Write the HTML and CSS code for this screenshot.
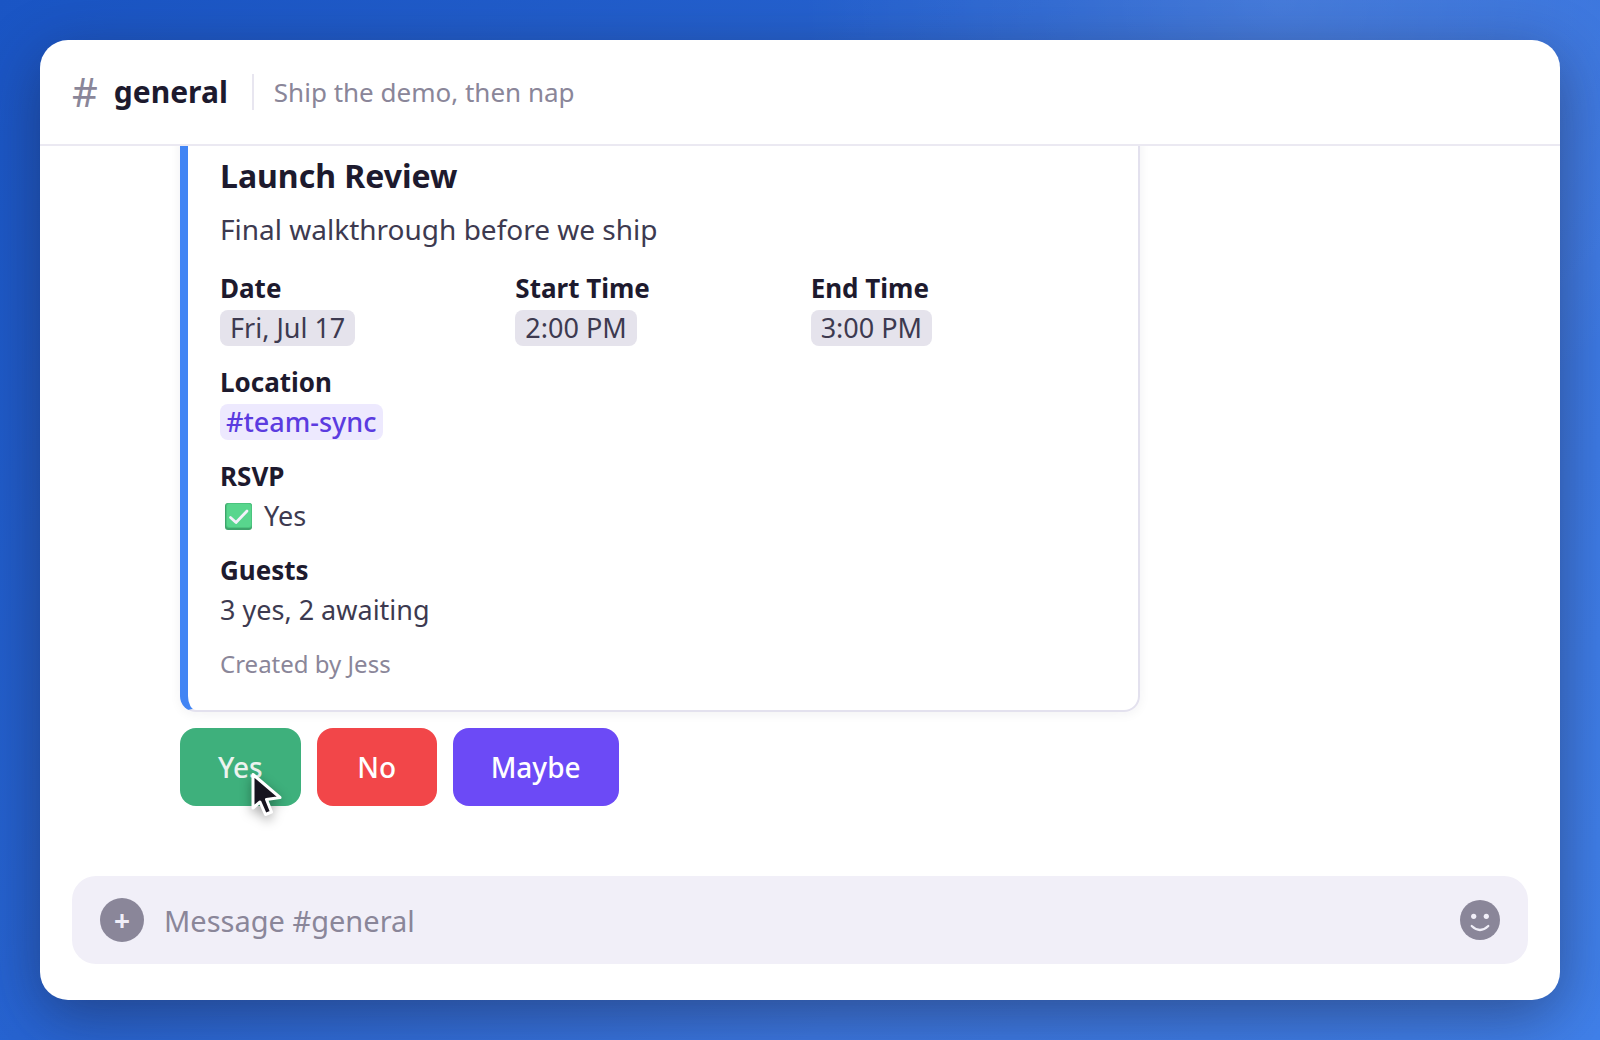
FILE: index.html
```html
<!DOCTYPE html>
<html lang="en">
  <head>
    <meta charset="UTF-8" />
    <title>#general</title>
    <meta name="viewport" content="width=device-width, initial-scale=1.0" />
    <link rel="stylesheet" href="styles.css">
  </head>
  <body>
    <main class="window">
      <header class="channel-header">
        <span class="hash">#</span>
        <h1 class="channel-name">general</h1>
        <span class="topic">Ship the demo, then nap</span>
      </header>

      <section class="messages">
        <article class="embed">
          <h2 class="embed-title">Launch Review</h2>
          <p class="embed-description">Final walkthrough before we ship</p>
          <dl class="fields">
            <div class="field">
              <dt>Date</dt>
              <dd><time class="timestamp">Fri, Jul 17</time></dd>
            </div>
            <div class="field">
              <dt>Start Time</dt>
              <dd><time class="timestamp">2:00 PM</time></dd>
            </div>
            <div class="field">
              <dt>End Time</dt>
              <dd><time class="timestamp">3:00 PM</time></dd>
            </div>
            <div class="field field-wide">
              <dt>Location</dt>
              <dd><a class="mention" href="#team-sync">#team-sync</a></dd>
            </div>
            <div class="field field-wide">
              <dt>RSVP</dt>
              <dd>
                <svg class="check" width="27" height="27" viewBox="0 0 27 27" aria-hidden="true">
                  <rect width="27" height="27" rx="3" fill="#3fa46c" />
                  <rect x="1" width="26" height="25" rx="3" fill="#4bc47e" />
                  <rect x="2" y="1" width="24" height="23" rx="2" fill="#58d68d" />
                  <path d="M5.500 14.500 L11 19.500 L22 8" fill="none" stroke="#f3f1fa" stroke-width="2.800" stroke-linecap="round" stroke-linejoin="round" />
                </svg>
                Yes
              </dd>
            </div>
            <div class="field field-wide">
              <dt>Guests</dt>
              <dd>3 yes, 2 awaiting</dd>
            </div>
          </dl>
          <footer class="embed-footer">Created by Jess</footer>
        </article>

        <div class="actions">
          <div class="action">
            <button class="btn btn-yes" type="button">Yes</button>
            <svg class="cursor" width="40" height="52" viewBox="0 0 40 52" aria-hidden="true">
              <path d="M5 4.500 V38 L12 32 L17.500 44.500 L23.500 42 L18.500 29.500 L32 27.500 Z" />
            </svg>
          </div>
          <button class="btn btn-no" type="button">No</button>
          <button class="btn btn-maybe" type="button">Maybe</button>
        </div>
      </section>

      <form class="composer">
        <button class="attach" type="button" aria-label="Add attachment">+</button>
        <input class="message-input" type="text" placeholder="Message #general" aria-label="Message #general" />
        <button class="emoji" type="button" aria-label="Emoji">
          <svg width="40" height="40" viewBox="0 0 40 40" aria-hidden="true">
            <circle cx="20" cy="20" r="20" fill="#8a8699" />
            <circle cx="13.700" cy="16.300" r="2.600" fill="#f1eff8" />
            <circle cx="26.300" cy="16.300" r="2.600" fill="#f1eff8" />
            <path d="M11.700 26 Q20 34 28.300 26" fill="none" stroke="#f1eff8" stroke-width="2.200" stroke-linecap="round" />
          </svg>
        </button>
      </form>
    </main>
  </body>
</html>
```

FILE: styles.css
```css
* {
  box-sizing: border-box;
}

body {
  margin: 0;
  height: 100vh;
  padding: 40px;
  font-family: "Noto Sans", sans-serif;
  color: #1d1a2e;
  background:
    radial-gradient(ellipse 30% 45% at 80% 0%, rgba(255, 255, 255, 0.12), transparent),
    linear-gradient(135deg, #1a55c4, #2764d2 40%, #3c78e2 70%, #4080ea);
}

h1,
h2,
p,
dl,
dd {
  margin: 0;
}

.window {
  display: flex;
  flex-direction: column;
  height: 100%;
  background: #fff;
  border-radius: 28px;
  box-shadow: 0 16px 60px rgba(26, 26, 46, 0.45);
  overflow: hidden;
}

.channel-header {
  display: flex;
  align-items: center;
  flex-shrink: 0;
  padding: 32px;
  line-height: 40px;
  border-bottom: 2px solid #ebe9f2;
}

.hash {
  margin-right: 16px;
  font-size: 40px;
  color: #8a8699;
}

.channel-name {
  font-size: 30px;
}

.topic {
  margin-left: 24px;
  padding-left: 20px;
  font-size: 26px;
  line-height: 36px;
  color: #8a8699;
  border-left: 2px solid #e8e6f0;
}

.messages {
  flex: 1;
  min-height: 0;
  display: flex;
  flex-direction: column;
  justify-content: flex-end;
  gap: 16px;
  padding: 0 140px 70px;
  overflow: hidden;
}

.embed {
  flex-shrink: 0;
  max-width: 960px;
  padding: 32px 32px 28px;
  border: 2px solid #e3e1ee;
  border-left: 8px solid #4285f4;
  border-radius: 16px;
  box-shadow: 0 2px 12px rgba(26, 26, 46, 0.06);
}

.embed-title {
  font-size: 32px;
  line-height: 40px;
}

.embed-description {
  margin-top: 14px;
  font-size: 28px;
  line-height: 38px;
  color: #3d3a50;
}

.fields {
  display: grid;
  grid-template-columns: repeat(3, 1fr);
  row-gap: 14px;
  margin-top: 20px;
}

.field-wide {
  grid-column: 1 / -1;
}

.field dt {
  font-size: 26px;
  font-weight: 700;
  line-height: 40px;
}

.field dd {
  display: flex;
  align-items: center;
  height: 40px;
  font-size: 27px;
  line-height: 36px;
  color: #3d3a50;
}

.timestamp,
.mention {
  border-radius: 8px;
}

.timestamp {
  padding: 0 10px;
  background: #e5e3ec;
}

.mention {
  padding: 0 6px;
  font-weight: 500;
  color: #5b3be0;
  background: #ede9fe;
  text-decoration: none;
}

.check {
  margin: 0 12px 0 5px;
}

.embed-footer {
  margin-top: 16px;
  font-size: 24px;
  line-height: 36px;
  color: #8a8699;
}

.actions {
  display: flex;
  flex-shrink: 0;
  gap: 16px;
}

.action {
  position: relative;
}

.btn {
  min-width: 120px;
  height: 78px;
  padding: 0 38px;
  border: none;
  border-radius: 16px;
  font-family: inherit;
  font-size: 28px;
  font-weight: 500;
  color: #fff;
}

.btn-yes {
  color: #ecf3ef;
  background: #3eb07c;
}

.btn-no {
  background: #f24649;
}

.btn-maybe {
  background: #6c4af6;
}

.cursor {
  position: absolute;
  top: 42px;
  left: 68px;
  overflow: visible;
  fill: #17141f;
  stroke: #fff;
  stroke-width: 3;
  stroke-linejoin: round;
  filter: drop-shadow(0 4px 6px rgba(0, 0, 0, 0.35));
}

.composer {
  display: flex;
  align-items: center;
  flex-shrink: 0;
  gap: 20px;
  height: 88px;
  margin: 0 32px 36px;
  padding: 0 28px;
  background: #f1eff8;
  border-radius: 24px;
}

.attach,
.emoji {
  flex-shrink: 0;
  padding: 0;
  border: none;
}

.attach {
  width: 44px;
  height: 44px;
  border-radius: 50%;
  font-family: inherit;
  font-size: 28px;
  font-weight: 700;
  line-height: 44px;
  color: #f1eff8;
  background: #8a8699;
}

.message-input {
  flex: 1;
  min-width: 0;
  padding: 0;
  border: none;
  outline: none;
  font-family: inherit;
  font-size: 29px;
  background: transparent;
}

.message-input::placeholder {
  color: #8a8699;
}

.emoji {
  height: 42px;
  background: transparent;
}

.emoji svg {
  display: block;
}
```
